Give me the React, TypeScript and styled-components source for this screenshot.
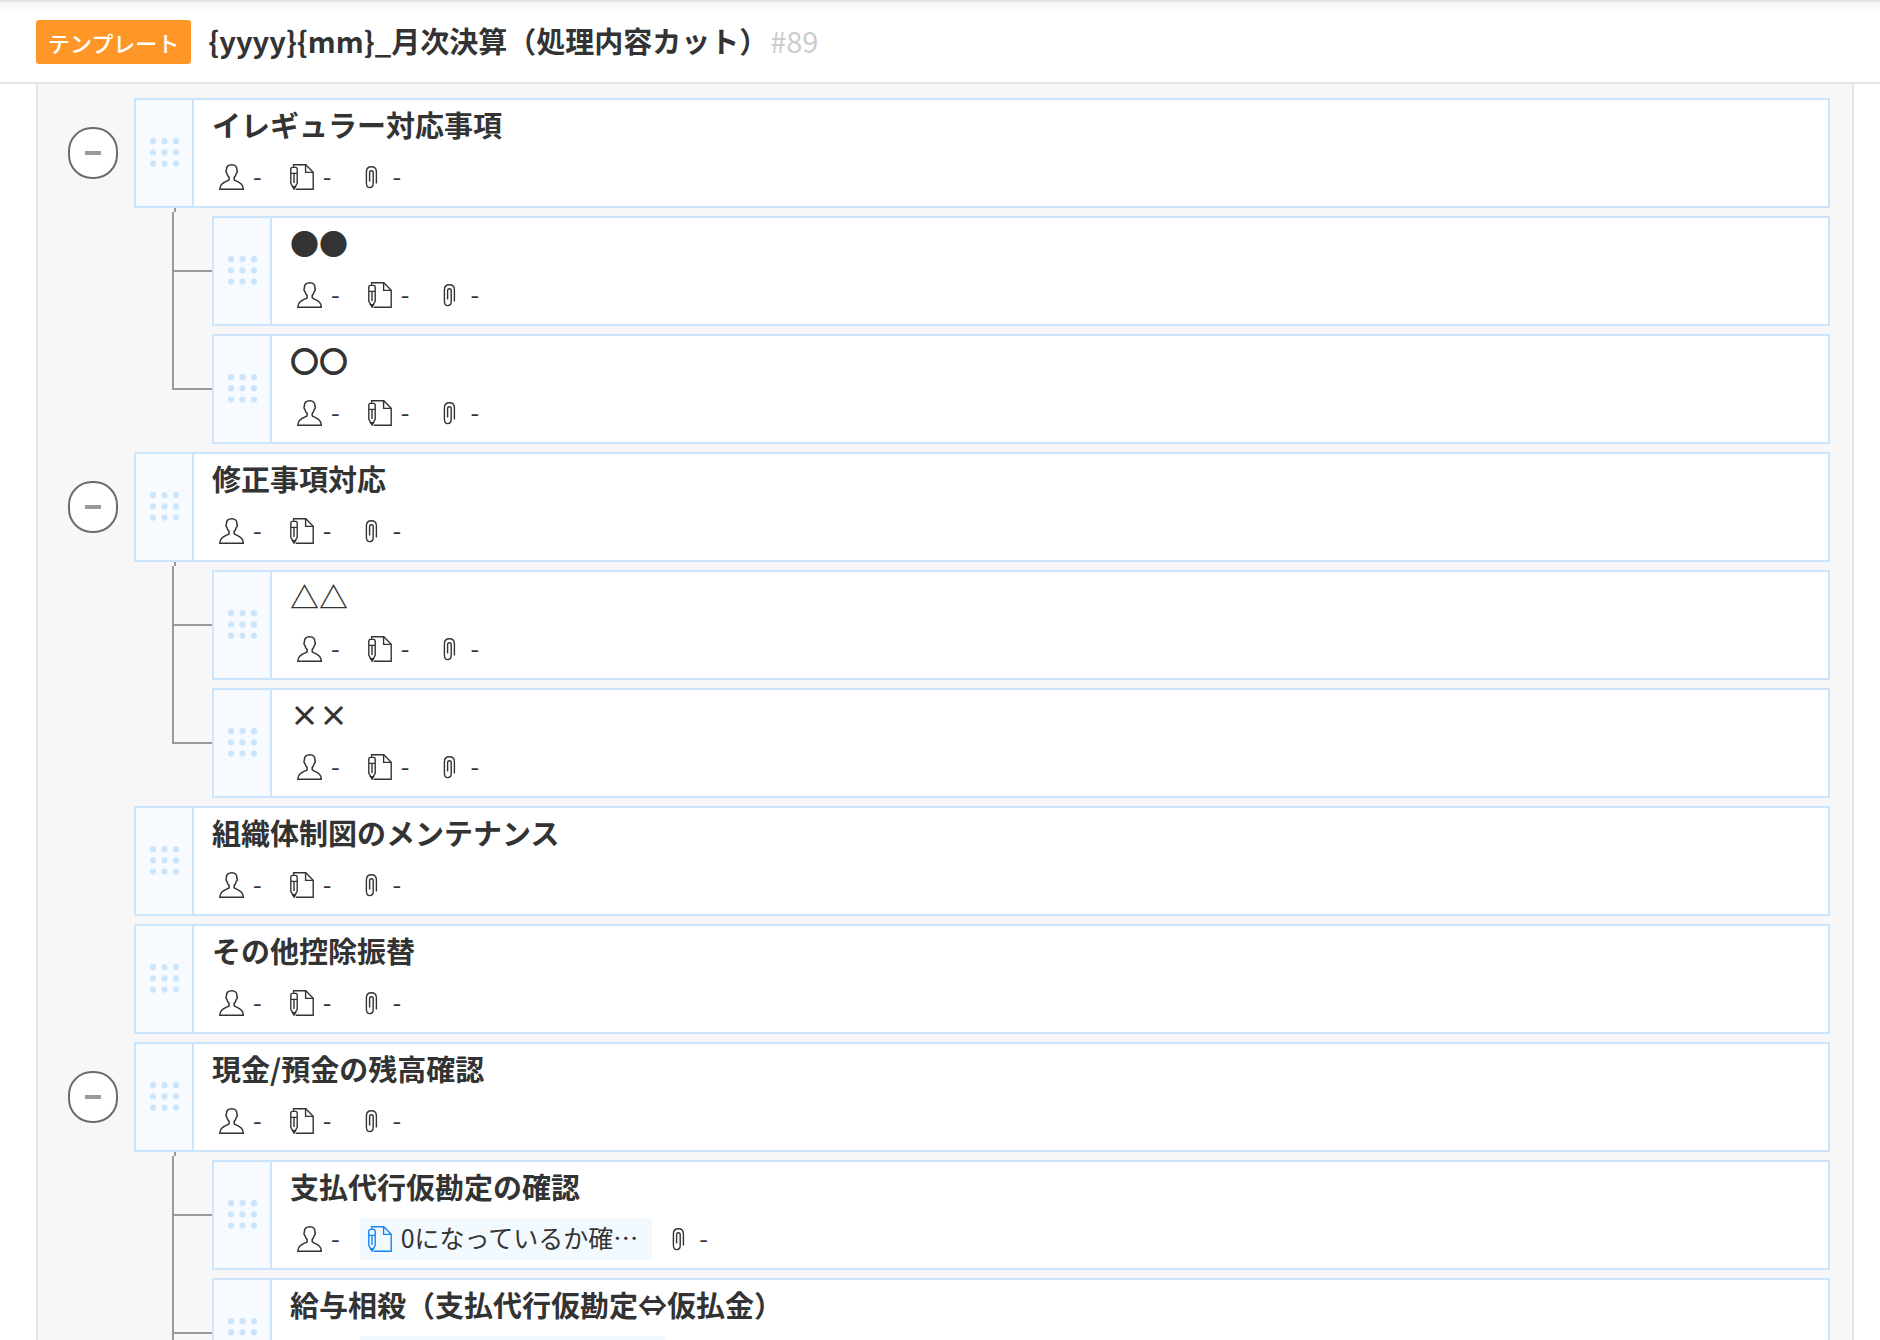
import React from "react";
import styled, { createGlobalStyle } from "styled-components";

const color = {
  text: "#333333",
  muted: "#cccccc",
  line: "#e5e5e5",
  canvas: "#f7f7f7",
  cardLine: "#cce5fb",
  handle: "#f7fbff",
  branch: "#999999",
  accent: "#1583f0",
  chip: "#f2f9ff",
  tag: "#ff9728",
};

const GlobalStyle = createGlobalStyle`
  *, *::before, *::after { box-sizing: border-box; }
  body {
    margin: 0;
    background: #ffffff;
    color: ${color.text};
    font-family: "Noto Sans CJK JP", "Noto Sans", sans-serif;
  }
  button { font: inherit; color: inherit; }
`;

const Page = styled.div`
  display: flex;
  flex-direction: column;
  height: 100vh;
  overflow: hidden;
`;

const Header = styled.header`
  display: flex;
  flex: none;
  align-items: flex-start;
  height: 84px;
  padding: 16px 36px 0;
  border-top: 2px solid ${color.line};
  border-bottom: 2px solid ${color.line};
  background: linear-gradient(#f5f5f5, #ffffff 10px);
`;

const Tag = styled.span`
  margin-top: 2px;
  padding: 0 12px;
  border-radius: 3px;
  background: ${color.tag};
  color: #ffffff;
  font-size: 22px;
  font-weight: 500;
  line-height: 44px;
`;

const PageTitle = styled.h1`
  margin: 0 0 0 17px;
  font-size: 29px;
  font-weight: 700;
  line-height: 44px;
`;

const Serial = styled.span`
  margin-left: 2px;
  color: ${color.muted};
  font-size: 29px;
  line-height: 44px;
`;

const Scroller = styled.main`
  flex: 1;
  min-height: 0;
  overflow-y: auto;
  scrollbar-width: none;
`;

const Panel = styled.div`
  display: flex;
  flex-direction: column;
  gap: 8px;
  margin: 0 26px 0 36px;
  padding: 14px 22px 40px 0;
  border: solid ${color.line};
  border-width: 0 2px;
  background: ${color.canvas};
`;

const Group = styled.section`
  display: grid;
  grid-template-columns: 96px minmax(0, 1fr);
`;

const Gutter = styled.div`
  display: flex;
  align-items: center;
  justify-content: flex-end;
  padding-right: 16px;
`;

const Toggle = styled.button`
  display: grid;
  place-items: center;
  width: 50px;
  height: 52px;
  padding: 0;
  border: 2px solid #6b6b6b;
  border-radius: 24px;
  background: #ffffff;
  cursor: pointer;
`;

const Minus = styled.span`
  width: 16px;
  height: 4px;
  background: ${color.branch};
`;

const Card = styled.article`
  display: flex;
  flex: 1;
  min-width: 0;
  height: 110px;
  border: 2px solid ${color.cardLine};
  background: #ffffff;
`;

const Handle = styled.button`
  display: grid;
  flex: none;
  place-items: center;
  width: 58px;
  padding: 0;
  border: 0;
  border-right: 2px solid ${color.cardLine};
  background: ${color.handle};
  cursor: move;
`;

const CardBody = styled.div`
  flex: 1;
  min-width: 0;
  padding-left: 17px;
`;

const CardTitle = styled.h2`
  margin: 0;
  padding: 2px 0 10px 1px;
  font-size: 29px;
  font-weight: 700;
  line-height: 44px;
  white-space: nowrap;
`;

const Meta = styled.div`
  display: flex;
  gap: 6px;
`;

const MetaItem = styled.button<{ $filled?: boolean }>`
  display: flex;
  align-items: center;
  gap: 9px;
  height: 42px;
  padding: 0 14px 0 8px;
  border: 0;
  background: ${(p) => (p.$filled ? color.chip : "transparent")};
  white-space: nowrap;
  cursor: pointer;

  svg {
    flex: none;
    color: ${(p) => (p.$filled ? color.accent : color.text)};
  }
`;

const MetaText = styled.span`
  padding-bottom: 4px;
  font-size: 25px;
  line-height: 38px;
`;

const Children = styled.ul`
  grid-column: 2;
  margin: 0;
  padding: 0 0 0 38px;
  list-style: none;
`;

const Child = styled.li`
  display: flex;
`;

const Branch = styled.div`
  display: flex;
  flex: none;
  flex-direction: column;
  width: 40px;
`;

const Stub = styled.span`
  width: 2px;
  height: 4px;
  margin-left: 2px;
  background: ${color.branch};
`;

const Elbow = styled.span<{ $first: boolean }>`
  height: ${(p) => (p.$first ? 60 : 64)}px;
  border: solid ${color.branch};
  border-width: 0 0 2px 2px;
`;

const Trunk = styled.span`
  flex: 1;
  border-left: 2px solid ${color.branch};
`;

const ChildCard = styled.div`
  display: flex;
  flex: 1;
  min-width: 0;
  padding-top: 8px;
`;

const DotsIcon = () => (
  <svg width="32" height="30" viewBox="0 0 32 30" fill={color.cardLine} aria-hidden="true">
    {[3.2, 14.4, 25.6].map((y) =>
      [5, 16.5, 28].map((x) => <circle key={`${x}-${y}`} cx={x} cy={y} r="3.1" />)
    )}
  </svg>
);

const PersonIcon = () => (
  <svg width="25" height="26" viewBox="0 0 25 26" fill="none" stroke="currentColor" strokeWidth="1.5" aria-hidden="true">
    <path d="M12.8 0.8C9 0.8 7.2 2.6 7.4 6.2C6.9 7 7.1 8.6 7.9 9.4C8.2 11.2 9 12.4 10.1 13.4V15.8C8.8 17.6 1 17.6 0.8 25.2H24.3C24.1 17.6 16.6 17.6 15.2 15.8V13.4C16.2 12.4 17 11.2 17.3 9.4C18.2 8.6 18.5 7 17.9 6.2C18.2 2.6 16.4 0.8 12.8 0.8Z" />
  </svg>
);

const NoteIcon = () => (
  <svg width="24" height="26" viewBox="0 0 24 26" fill="none" stroke="currentColor" strokeWidth="1.4" aria-hidden="true">
    <path d="M3.6 2.8V0.8H15.8L23.2 8.2V25.2H5.6" />
    <path d="M15.6 0.8V8.4H23.2" />
    <path d="M0.8 9.4V5.4Q0.8 3.4 2.4 3.4H5.6Q7.2 3.4 7.2 5.4V19.4L4 24.6L0.8 19.4V9.4H7.2" />
    <path d="M4 9.4V19" />
    <path d="M2.6 22.6H5.4L4 24.8Z" fill="currentColor" />
  </svg>
);

const ClipIcon = () => (
  <svg width="24" height="26" viewBox="0 0 24 26" fill="none" stroke="currentColor" strokeWidth="1.4" aria-hidden="true">
    <path d="M17.4 19.6V8Q17.4 2.8 12.4 2.8Q7.4 2.8 7.4 8V19Q7.4 23.6 10.8 23.6Q14.2 23.6 14.2 19.6V8.6Q14.2 6.8 12.4 6.8Q10.6 6.8 10.6 8.6V17.4" />
  </svg>
);

type TaskData = { title: string; note?: string };
type GroupData = TaskData & { children?: TaskData[] };

const groups: GroupData[] = [
  { title: "イレギュラー対応事項", children: [{ title: "●●" }, { title: "〇〇" }] },
  { title: "修正事項対応", children: [{ title: "△△" }, { title: "××" }] },
  { title: "組織体制図のメンテナンス" },
  { title: "その他控除振替" },
  {
    title: "現金/預金の残高確認",
    children: [
      { title: "支払代行仮勘定の確認", note: "0になっているか確…" },
      { title: "給与相殺（支払代行仮勘定⇔仮払金）", note: "仮払金の残高を確認…" },
      { title: "仮払金の確認" },
    ],
  },
];

const Task = ({ title, note }: TaskData) => (
  <Card>
    <Handle type="button" aria-label="並べ替え">
      <DotsIcon />
    </Handle>
    <CardBody>
      <CardTitle>{title}</CardTitle>
      <Meta>
        <MetaItem type="button" title="担当者">
          <PersonIcon />
          <MetaText>-</MetaText>
        </MetaItem>
        <MetaItem type="button" title="処理内容" $filled={Boolean(note)}>
          <NoteIcon />
          <MetaText>{note ?? "-"}</MetaText>
        </MetaItem>
        <MetaItem type="button" title="添付ファイル">
          <ClipIcon />
          <MetaText>-</MetaText>
        </MetaItem>
      </Meta>
    </CardBody>
  </Card>
);

export default function App() {
  return (
    <Page lang="ja">
      <GlobalStyle />
      <Header>
        <Tag>テンプレート</Tag>
        <PageTitle>{"{yyyy}{mm}_月次決算（処理内容カット）"}</PageTitle>
        <Serial>#89</Serial>
      </Header>
      <Scroller>
        <Panel>
          {groups.map(({ title, note, children }) => (
            <Group key={title}>
              <Gutter>
                {children && (
                  <Toggle type="button" aria-label="折りたたむ" aria-expanded="true">
                    <Minus />
                  </Toggle>
                )}
              </Gutter>
              <Task title={title} note={note} />
              {children && (
                <Children>
                  {children.map((child, i) => (
                    <Child key={child.title}>
                      <Branch>
                        {i === 0 && <Stub />}
                        <Elbow $first={i === 0} />
                        {i < children.length - 1 && <Trunk />}
                      </Branch>
                      <ChildCard>
                        <Task {...child} />
                      </ChildCard>
                    </Child>
                  ))}
                </Children>
              )}
            </Group>
          ))}
        </Panel>
      </Scroller>
    </Page>
  );
}
